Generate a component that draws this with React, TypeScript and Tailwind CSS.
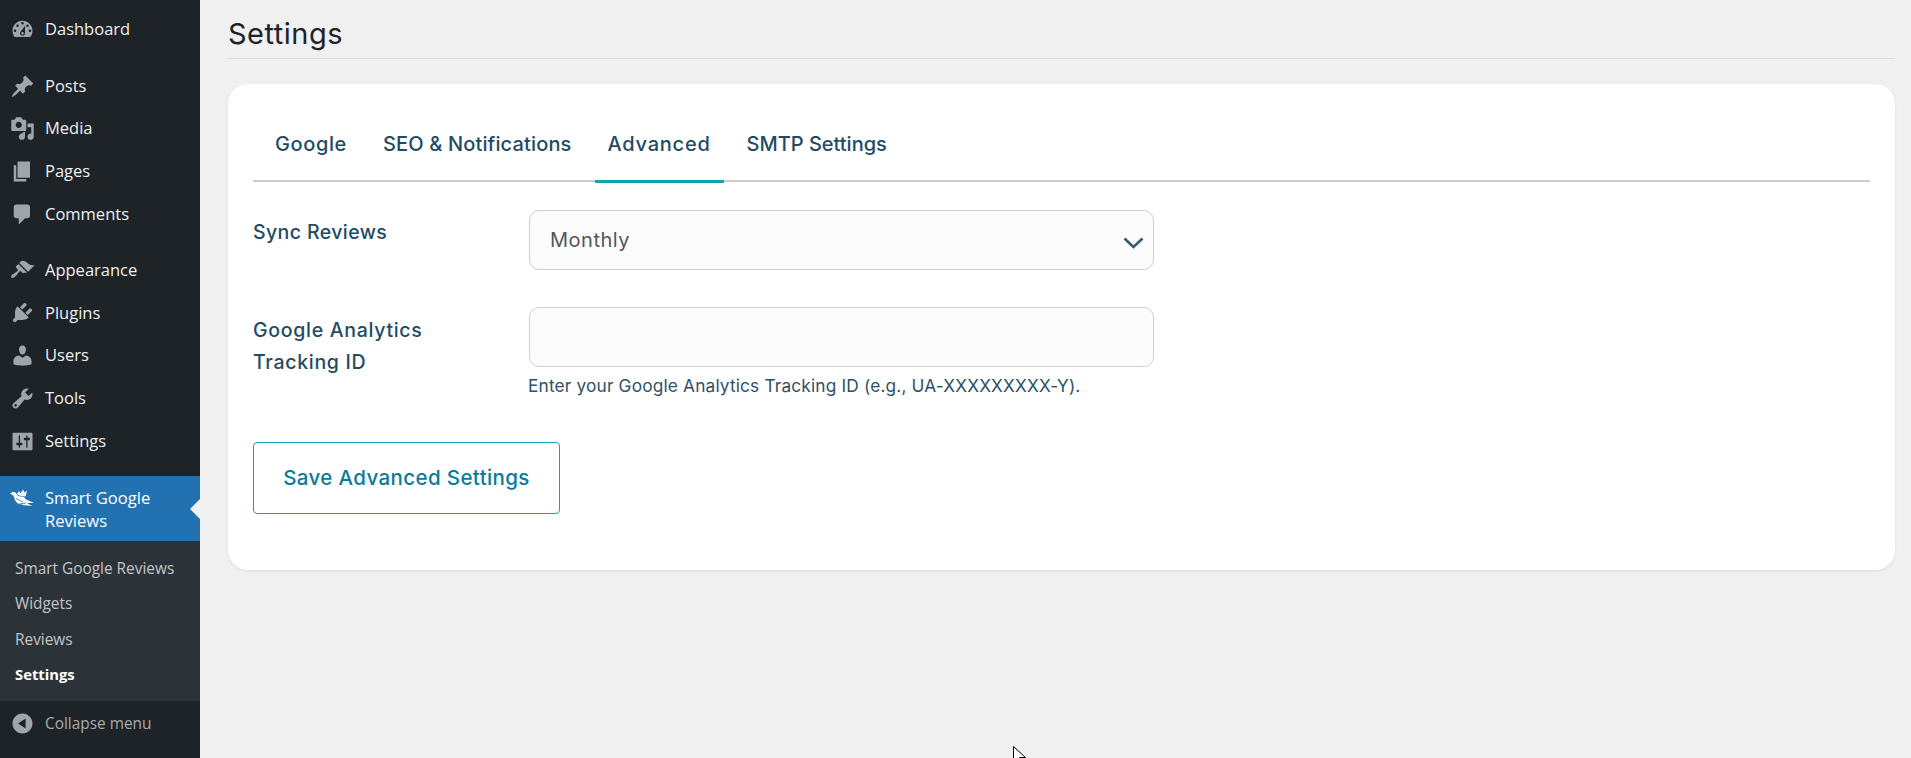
const sans = "font-['Open_Sans',sans-serif]";

const icons: Record<string, string> = {
  dashboard:
    "M3.76 16h12.48c1.1-1.37 1.76-3.11 1.76-5 0-4.42-3.58-8-8-8s-8 3.58-8 8c0 1.89.66 3.63 1.76 5zM10 4c.55 0 1 .45 1 1s-.45 1-1 1-1-.45-1-1 .45-1 1-1zM6 6c.55 0 1 .45 1 1s-.45 1-1 1-1-.45-1-1 .45-1 1-1zm8 0c.55 0 1 .45 1 1s-.45 1-1 1-1-.45-1-1 .45-1 1-1zm-5.37 5.55L12 7v6c0 1.1-.9 2-2 2s-2-.9-2-2c0-.57.24-1.08.63-1.45zM4 10c.55 0 1 .45 1 1s-.45 1-1 1-1-.45-1-1 .45-1 1-1zm12 0c.55 0 1 .45 1 1s-.45 1-1 1-1-.45-1-1 .45-1 1-1zm-5 3c0-.55-.45-1-1-1s-1 .45-1 1 .45 1 1 1 1-.45 1-1z",
  posts:
    "M10.44 3.02l1.82-1.82 6.36 6.35-1.83 1.82c-1.05-.68-2.48-.57-3.41.36l-.75.75c-.92.93-1.04 2.35-.35 3.41l-1.83 1.82-2.41-2.41-2.8 2.79c-.42.42-3.38 2.71-3.8 2.29s1.86-3.39 2.28-3.81l2.79-2.79L4.1 9.36l1.83-1.82c1.05.69 2.48.57 3.4-.36l.75-.75c.93-.92 1.05-2.35.36-3.41z",
  media:
    "M13 11V4c0-.55-.45-1-1-1h-1.67L9 1H5L3.67 3H2c-.55 0-1 .45-1 1v7c0 .55.45 1 1 1h10c.55 0 1-.45 1-1zM7 4.5c1.38 0 2.5 1.12 2.5 2.5S8.38 9.5 7 9.5 4.5 8.38 4.5 7 5.62 4.5 7 4.5zM14 6h5v10.5c0 1.38-1.12 2.5-2.5 2.5S14 17.88 14 16.5s1.12-2.5 2.5-2.5c.17 0 .34.02.5.05V9h-3V6zm-4 8.05V13h2v3.5c0 1.38-1.12 2.5-2.5 2.5S7 17.88 7 16.5 8.12 14 9.5 14c.17 0 .34.02.5.05z",
  pages: "M6 15V2h10v13H6zm-1 1h8v2H3V5h2v11z",
  comments:
    "M5 2h9c1.1 0 2 .9 2 2v7c0 1.1-.9 2-2 2h-2l-5 5v-5H5c-1.1 0-2-.9-2-2V4c0-1.1.9-2 2-2z",
  appearance:
    "M14.48 11.06L7.41 3.99l1.5-1.5c.5-.56 2.3-.47 3.51.32 1.21.8 1.43 1.28 2.91 2.1 1.18.64 2.45 1.26 4.45.85zm-.71.71L6.7 4.7 4.93 6.47c-.39.39-.39 1.02 0 1.41l1.06 1.06c.39.39.39 1.03 0 1.42-.6.6-1.43 1.11-2.21 1.69-.35.26-.7.53-1.01.84C1.43 13.23.4 14.96 1.15 15.71s2.48-.28 3.82-1.67c.3-.31.58-.66.84-1.01.58-.78 1.09-1.61 1.69-2.21.39-.39 1.02-.39 1.41 0l1.06 1.06c.39.39 1.02.39 1.41 0z",
  plugins:
    "M13.11 4.36L9.87 7.6 8 5.73l3.24-3.24c.35-.34 1.05-.2 1.56.32.52.51.66 1.21.31 1.55zm-8 1.77l.91-1.12 9.01 9.01-1.19.84c-.71.71-2.63 1.16-3.82 1.16H6.14L4.9 17.26c-.59.59-1.54.59-2.12 0-.59-.58-.59-1.53 0-2.12l1.24-1.24v-3.88c0-1.13.4-3.19 1.09-3.89zm7.26 3.97l3.24-3.24c.34-.35 1.04-.21 1.55.31.52.51.66 1.21.31 1.55l-3.24 3.25z",
  users:
    "M10 9.25c-2.27 0-2.73-3.44-2.73-3.44C7 4.02 7.82 2 9.97 2c2.16 0 2.98 2.02 2.71 3.81 0 0-.41 3.44-2.68 3.44zm0 2.57L12.72 10c2.39 0 4.52 2.33 4.52 4.53v2.49s-3.65 1.13-7.24 1.13c-3.65 0-7.24-1.13-7.24-1.13v-2.49c0-2.25 1.94-4.48 4.47-4.48z",
  tools:
    "M16.68 9.77c-1.34 1.34-3.3 1.67-4.95.99l-5.41 6.52c-.99.99-2.59.99-3.58 0s-.99-2.59 0-3.57l6.52-5.42c-.68-1.65-.35-3.61.99-4.95 1.28-1.28 3.12-1.62 4.72-1.06l-2.89 2.89 2.82 2.82 2.86-2.87c.53 1.58.18 3.39-1.08 4.65zM3.81 16.21c.4.39 1.04.39 1.43 0 .4-.4.4-1.04 0-1.43-.39-.4-1.03-.4-1.43 0-.39.39-.39 1.03 0 1.43z",
  settings:
    "M18 16V4c0-.55-.45-1-1-1H3c-.55 0-1 .45-1 1v12c0 .55.45 1 1 1h14c.55 0 1-.45 1-1zM8 11h1c.55 0 1 .45 1 1s-.45 1-1 1H8v1.5c0 .28-.22.5-.5.5s-.5-.22-.5-.5V13H6c-.55 0-1-.45-1-1s.45-1 1-1h1V5.5c0-.28.22-.5.5-.5s.5.22.5.5V11zm5-2h-1c-.55 0-1-.45-1-1s.45-1 1-1h1V5.5c0-.28.22-.5.5-.5s.5.22.5.5V7h1c.55 0 1 .45 1 1s-.45 1-1 1h-1v5.5c0 .28-.22.5-.5.5s-.5-.22-.5-.5V9z",
  collapse:
    "M18 10c0-4.42-3.58-8-8-8s-8 3.58-8 8 3.58 8 8 8 8-3.58 8-8zm-5.5 4l-6-4 6-4v8z",
};

function Dashicon({ name }: { name: string }) {
  return (
    <svg viewBox="0 0 20 20" className="w-[25px] h-[25px] shrink-0 fill-[#a0a5aa]">
      <path fillRule="evenodd" d={icons[name]} />
    </svg>
  );
}

function MenuRow({ icon, label }: { icon: string; label: string }) {
  return (
    <div className="flex items-center h-[42.7px] pl-[10px]">
      <Dashicon name={icon} />
      <span className="ml-[10px] text-[16.5px] text-[#f0f0f1]">{label}</span>
    </div>
  );
}

function Sidebar() {
  return (
    <aside className={`${sans} w-[200px] shrink-0 bg-[#1d2327] pt-[8px]`}>
      <MenuRow icon="dashboard" label="Dashboard" />
      <div className="h-[14px]" />
      <MenuRow icon="posts" label="Posts" />
      <MenuRow icon="media" label="Media" />
      <MenuRow icon="pages" label="Pages" />
      <MenuRow icon="comments" label="Comments" />
      <div className="h-[13.5px]" />
      <MenuRow icon="appearance" label="Appearance" />
      <MenuRow icon="plugins" label="Plugins" />
      <MenuRow icon="users" label="Users" />
      <MenuRow icon="tools" label="Tools" />
      <MenuRow icon="settings" label="Settings" />
      <div className="h-[13.5px]" />
      <div className="relative flex items-start h-[65px] pl-[10px] pt-[10px] bg-[#2271b1]">
        {/* plugin logo */}
        <svg viewBox="0 0 25 18" className="w-[25px] h-[18px] shrink-0 mt-[3px] mr-[1px] fill-white">
          <path d="M0 4.5 2 3.5C3.5 2.5 5.5 3 6.5 5L8 7l6 1 3 4-4 3C9 16.5 5 13 4 8 3.500 6.500 2 5.500 0 4.500Z" />
          <path d="M7 5 9 2l1.500 2.500L13 .5l1.500 3L17 1.500 15.500 7.500 9 6.500Z" />
          <path d="M15 10l9 4h-7l5 3-10-1Z" />
          <path d="M6 9.500 13 13M9 15l7-1" className="fill-none stroke-[#2271b1] stroke-[0.8]" />
        </svg>
        <span className="ml-[9px] text-[16.6px] leading-[23px] text-white">
          Smart Google
          <br />
          Reviews
        </span>
        <span className="absolute right-0 top-[23px] w-0 h-0 border-y-[10px] border-y-transparent border-r-[10px] border-r-[#f0f0f1]" />
      </div>
      <div className="bg-[#2c3338] pt-[10px] pb-[9px] pl-[15px] text-[15.4px] text-[#c3c4c7]">
        <div className="flex items-center h-[35.3px]">Smart Google Reviews</div>
        <div className="flex items-center h-[35.3px]">Widgets</div>
        <div className="flex items-center h-[35.3px]">Reviews</div>
        <div className="flex items-center h-[35.3px] text-[14.8px] font-bold text-white">Settings</div>
      </div>
      <div className="flex items-center h-[44px] pl-[10px] text-[#a7aaad]">
        <Dashicon name="collapse" />
        <span className="ml-[10px] text-[15.4px]">Collapse menu</span>
      </div>
    </aside>
  );
}

const tabs = [
  { label: "Google", cls: "tracking-[0.6px]" },
  { label: "SEO & Notifications", cls: "tracking-[0.16px]" },
  { label: "Advanced", cls: "tracking-[0.75px]" },
  { label: "SMTP Settings", cls: "tracking-[0px]" },
];

function Tab({ label, cls, active }: { label: string; cls: string; active?: boolean }) {
  return (
    <div
      className={`flex items-center px-[13px] pb-[8px] h-[67px] text-[20px] font-medium text-[#1f4b63] border-b-[3px] -mb-[2px] ${cls} ${
        active ? "border-[#10a5b1]" : "border-transparent"
      }`}
    >
      {label}
    </div>
  );
}

export default function App() {
  return (
    <div className="flex w-[1911px] h-[758px] overflow-hidden bg-[#f0f0f1] font-['Inter',sans-serif]">
      <Sidebar />
      <main className="flex-1 pl-[28px] pr-[16px]">
        <h1 className="h-[59px] pt-[16px] text-[29px] leading-[36px] tracking-[0.5px] text-[#1d2327] border-b border-[#dcdcde]">
          Settings
        </h1>
        <section className="mt-[25px] h-[486px] rounded-[20px] bg-white pt-[32px] px-[25px] shadow-[0_1px_3px_rgba(0,0,0,0.08)]">
          <nav className="flex gap-[10px] pl-[9px] h-[66px] border-b-2 border-[#c9cdd1]">
            {tabs.map((t) => (
              <Tab key={t.label} label={t.label} cls={t.cls} active={t.label === "Advanced"} />
            ))}
          </nav>
          <div className="flex mt-[28px]">
            <label className="w-[276px] pt-[6px] text-[19.5px] leading-[32px] tracking-[0.4px] font-medium text-[#1f4b63]">
              Sync Reviews
            </label>
            <div className="relative w-[625px] h-[60px] flex items-center px-[20px] rounded-[10px] border border-[#c5d3e3] bg-[#fcfcfd] text-[20px] tracking-[0.5px] text-[#50575e]">
              Monthly
              <svg viewBox="0 0 21 12" className="absolute right-[9px] top-[26px] w-[21px] h-[12px] fill-none stroke-[#3a5a6e] stroke-[2.6]">
                <path d="M1.5 1.5 10.500 10l9-8.500" />
              </svg>
            </div>
          </div>
          <div className="flex mt-[37px]">
            <label className="w-[276px] pt-[7px] text-[19.5px] leading-[32px] tracking-[0.7px] font-medium text-[#1f4b63]">
              Google Analytics
              <br />
              Tracking ID
            </label>
            <div>
              <input className="block w-[625px] h-[60px] rounded-[10px] border border-[#c5d3e3] bg-[#fcfcfd]" />
              <p className="-ml-[1px] mt-[8px] text-[17.3px] leading-[22px] tracking-[0.16px] text-[#2f5066]">
                Enter your Google Analytics Tracking ID (e.g., UA-XXXXXXXXX-Y).
              </p>
            </div>
          </div>
          <button className="mt-[45px] flex items-center justify-center w-[307px] h-[72px] rounded-[4px] border border-[#10a5b1] text-[20.5px] tracking-[0.38px] font-medium text-[#0b7a9e]">
            Save Advanced Settings
          </button>
        </section>
      </main>
      {/* mouse pointer, cut off by the bottom of the window */}
      <svg viewBox="0 0 14 20" className="absolute left-[1013px] top-[746px] w-[14px] h-[20px] fill-white stroke-black">
        <path d="M.5.5v16l4-4 3 6 2-1-3-6h6Z" />
      </svg>
    </div>
  );
}
